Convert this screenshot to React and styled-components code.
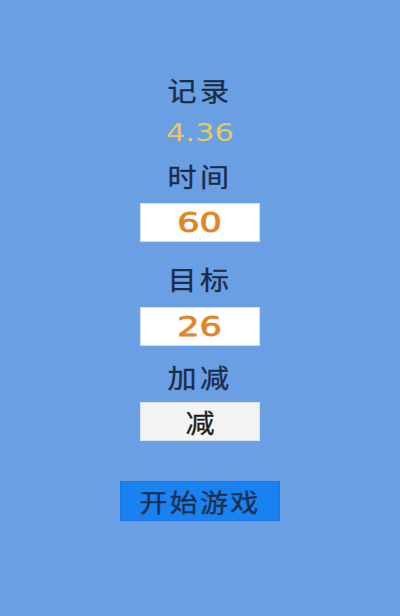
import React from "react";
import styled, { createGlobalStyle } from "styled-components";

const GlobalStyle = createGlobalStyle`
  html, body {
    margin: 0;
    padding: 0;
    background: #6a9fe3;
  }
  body {
    font-family: "Noto Sans CJK SC", "Liberation Sans", sans-serif;
  }
`;

const Screen = styled.div`
  width: 400px;
  height: 616px;
  background: #6a9fe3;
  display: flex;
  flex-direction: column;
  align-items: center;
  padding-top: 69px;
  box-sizing: border-box;
`;

const Label = styled.div`
  height: 40px;
  margin-top: ${(p) => p.$top || 0}px;
  display: flex;
  align-items: center;
  justify-content: center;
  font-size: 26px;
  color: #1a2c4a;
  letter-spacing: 3px;
  -webkit-text-stroke: 0.3px #1a2c4a;
  & span {
    display: inline-block;
    transform: scaleX(1.12);
  }
`;

const Record = styled.div`
  height: 46px;
  display: flex;
  align-items: center;
  justify-content: center;
  font-family: "DejaVu Sans", sans-serif;
  font-size: 25px;
  color: #e6c960;
  & span {
    display: inline-block;
    transform: scaleX(1.22);
  }
`;

const NumberBox = styled.div`
  width: 120px;
  height: 39px;
  margin-top: ${(p) => p.$top || 0}px;
  box-sizing: border-box;
  background: #ffffff;
  border: 1px solid #d6dbe4;
  display: flex;
  align-items: center;
  justify-content: center;
  font-family: "DejaVu Sans", sans-serif;
  font-size: 26px;
  color: #e0862a;
  -webkit-text-stroke: 0.8px #e0862a;
  & span {
    display: inline-block;
    transform: scaleX(1.35);
  }
`;

const Select = styled.div`
  width: 120px;
  height: 39px;
  margin-top: 6px;
  box-sizing: border-box;
  background: #f4f4f4;
  border: 1px solid #dcdfe4;
  display: flex;
  align-items: center;
  justify-content: center;
  font-size: 26px;
  color: #1e1e1e;
  -webkit-text-stroke: 0.3px #1e1e1e;
  & span {
    display: inline-block;
    transform: scaleX(1.12);
  }
`;

const StartButton = styled.button`
  width: 160px;
  height: 40px;
  margin-top: 40px;
  border: 1px solid #1b78e0;
  background: #1a82f0;
  color: #1c2f4e;
  font-family: "Noto Sans CJK SC", sans-serif;
  font-size: 25px;
  letter-spacing: 2px;
  -webkit-text-stroke: 0.3px #1c2f4e;
  padding: 0;
  display: flex;
  align-items: center;
  justify-content: center;
  & span {
    display: inline-block;
    transform: scaleX(1.12);
  }
`;

export default function App() {
  return (
    <>
      <GlobalStyle />
      <Screen>
        <Label><span>记录</span></Label>
        <Record><span>4.36</span></Record>
        <Label><span>时间</span></Label>
        <NumberBox $top={8}><span>60</span></NumberBox>
        <Label $top={16}><span>目标</span></Label>
        <NumberBox $top={9}><span>26</span></NumberBox>
        <Label $top={10}><span>加减</span></Label>
        <Select><span>减</span></Select>
        <StartButton><span>开始游戏</span></StartButton>
      </Screen>
    </>
  );
}
